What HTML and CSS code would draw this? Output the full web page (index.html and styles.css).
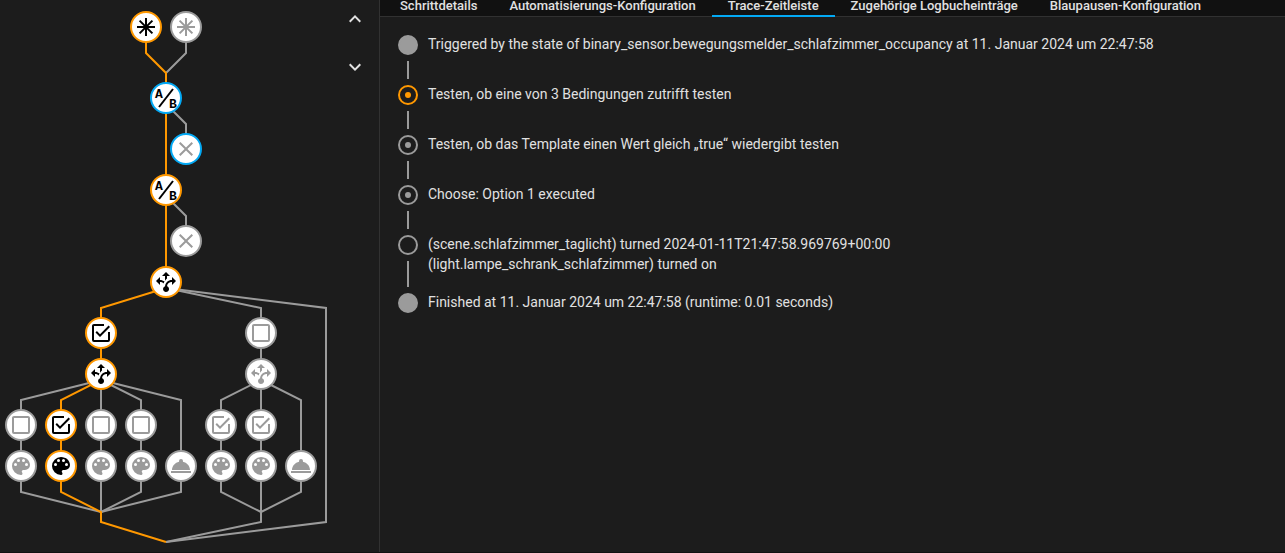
FILE: index.html
```
<!DOCTYPE html>
<html lang="de">

<head>
    <meta charset="UTF-8">
    <meta name="viewport" content="width=device-width, initial-scale=1.0">
    <title>Automatisierungs-Trace</title>
    <link rel="stylesheet" href="styles.css">
</head>

<body>

    <!-- Icons used by the graph nodes -->
    <svg class="icon-defs" aria-hidden="true">
        <defs>
            <symbol id="trigger" viewBox="0 0 24 24">
                <path class="stroke" d="M12 3V21M3 12H21M5.6 5.6L18.4 18.4M18.4 5.6L5.6 18.4" />
            </symbol>
            <symbol id="condition" viewBox="0 0 24 24">
                <path class="stroke" d="M5 21L19 3" />
                <text x="1" y="12">A</text>
                <text x="15" y="22">B</text>
            </symbol>
            <symbol id="close" viewBox="0 0 24 24">
                <path d="M19,6.41L17.59,5L12,10.59L6.41,5L5,6.41L10.59,12L5,17.59L6.41,19L12,13.41L17.59,19L19,17.59L13.41,12L19,6.41Z" />
            </symbol>
            <symbol id="choose" viewBox="0 0 24 24">
                <path d="M9.64,13.4C8.63,12.5 7.34,12.03 6,12V15L2,11L6,7V10C7.67,10 9.3,10.57 10.63,11.59C10.22,12.15 9.89,12.76 9.64,13.4M18,15V12C17.5,12 13.5,12.16 13.05,16.2C14.61,16.75 15.43,18.47 14.88,20.03C14.33,21.59 12.61,22.41 11.05,21.86C9.5,21.3 8.67,19.59 9.22,18.03C9.5,17.17 10.2,16.5 11.05,16.2C11.34,12.61 14.4,9.88 18,10V7L22,11L18,15M13,6H16L12,2L8,6H11V10.81C11.68,9.76 12.32,9.15 13,8.5V6Z" />
            </symbol>
            <symbol id="checked" viewBox="0 0 24 24">
                <path d="M19,19H5V5H15V3H5C3.89,3 3,3.89 3,5V19A2,2 0 0,0 5,21H19A2,2 0 0,0 21,19V11H19M7.91,10.08L6.5,11.5L11,16L21,6L19.59,4.58L11,13.17L7.91,10.08Z" />
            </symbol>
            <symbol id="blank" viewBox="0 0 24 24">
                <path d="M19,3H5C3.89,3 3,3.89 3,5V19A2,2 0 0,0 5,21H19A2,2 0 0,0 21,19V5C21,3.89 20.1,3 19,3M19,5V19H5V5H19Z" />
            </symbol>
            <symbol id="scene" viewBox="0 0 24 24">
                <path d="M17.5,12A1.5,1.5 0 0,1 16,10.5A1.5,1.5 0 0,1 17.5,9A1.5,1.5 0 0,1 19,10.5A1.5,1.5 0 0,1 17.5,12M14.5,8A1.5,1.5 0 0,1 13,6.5A1.5,1.5 0 0,1 14.5,5A1.5,1.5 0 0,1 16,6.5A1.5,1.5 0 0,1 14.5,8M9.5,8A1.5,1.5 0 0,1 8,6.5A1.5,1.5 0 0,1 9.5,5A1.5,1.5 0 0,1 11,6.5A1.5,1.5 0 0,1 9.5,8M6.5,12A1.5,1.5 0 0,1 5,10.5A1.5,1.5 0 0,1 6.5,9A1.5,1.5 0 0,1 8,10.5A1.5,1.5 0 0,1 6.5,12M12,3A9,9 0 0,0 3,12A9,9 0 0,0 12,21A1.5,1.5 0 0,0 13.5,19.5C13.5,19.11 13.35,18.76 13.11,18.5C12.88,18.23 12.73,17.88 12.73,17.5A1.5,1.5 0 0,1 14.23,16H16A5,5 0 0,0 21,11C21,6.58 16.97,3 12,3Z" />
            </symbol>
            <symbol id="service" viewBox="0 0 24 24">
                <path d="M12,5A2,2 0 0,1 14,7C14,7.24 13.96,7.47 13.88,7.69C17.95,8.5 21,11.91 21,16H3C3,11.91 6.05,8.5 10.12,7.69C10.04,7.47 10,7.24 10,7A2,2 0 0,1 12,5M22,19H2V17H22V19Z" />
            </symbol>
        </defs>
    </svg>

    <main class="trace">
        <section class="graph-panel">
            <svg class="graph" width="330" height="545" viewBox="0 0 330 545" role="img" aria-label="Ablaufdiagramm">
                <!-- Paths that were not taken -->
                <g class="lines">
                    <path d="M186 27V53L166 73" />
                    <path d="M166 104L186 124V149" />
                    <path d="M166 196L186 216V241" />
                    <path d="M166 288L261 308V374" />
                    <path d="M166 288L326 308V522L166 542" />
                    <path d="M101 380L21 400V492L101 512" />
                    <path d="M101 380V512" />
                    <path d="M101 380L141 400V492L101 512" />
                    <path d="M101 380L181 400V492L101 512" />
                    <path d="M261 380L221 400V492L261 512" />
                    <path d="M261 374V522L166 542" />
                    <path d="M261 380L301 400V492L261 512" />
                </g>

                <!-- Executed path -->
                <g class="lines tracked">
                    <path d="M146 27V53L166 73V288L101 308V380L61 400V492L101 512V522L166 542" />
                </g>

                <g id="nodes"></g>
            </svg>

            <div class="graph-actions">
                <button type="button" aria-label="Vorheriger Schritt">
                    <svg viewBox="0 0 24 24"><path d="M7.41,15.41L12,10.83L16.59,15.41L18,14L12,8L6,14L7.41,15.41Z" /></svg>
                </button>
                <button type="button" aria-label="Nächster Schritt">
                    <svg viewBox="0 0 24 24"><path d="M7.41,8.59L12,13.17L16.59,8.59L18,10L12,16L6,10L7.41,8.59Z" /></svg>
                </button>
            </div>
        </section>

        <section class="info">
            <nav class="tabs" role="tablist">
                <button type="button" role="tab">Schrittdetails</button>
                <button type="button" role="tab">Automatisierungs-Konfiguration</button>
                <button type="button" role="tab" class="active" aria-selected="true">Trace-Zeitleiste</button>
                <button type="button" role="tab">Zugehörige Logbucheinträge</button>
                <button type="button" role="tab">Blaupausen-Konfiguration</button>
            </nav>

            <ol class="timeline">
                <li>
                    <span class="marker filled"></span>
                    <p>Triggered by the state of binary_sensor.bewegungsmelder_schlafzimmer_occupancy at 11. Januar 2024 um 22:47:58</p>
                </li>
                <li>
                    <span class="marker dot selected"></span>
                    <p>Testen, ob eine von 3 Bedingungen zutrifft testen</p>
                </li>
                <li>
                    <span class="marker dot"></span>
                    <p>Testen, ob das Template einen Wert gleich „true“ wiedergibt testen</p>
                </li>
                <li>
                    <span class="marker dot"></span>
                    <p>Choose: Option 1 executed</p>
                </li>
                <li>
                    <span class="marker"></span>
                    <p>(scene.schlafzimmer_taglicht) turned 2024-01-11T21:47:58.969769+00:00<br>(light.lampe_schrank_schlafzimmer) turned on</p>
                </li>
                <li>
                    <span class="marker filled"></span>
                    <p>Finished at 11. Januar 2024 um 22:47:58 (runtime: 0.01 seconds)</p>
                </li>
            </ol>
        </section>
    </main>

    <script>
        // [x, y, icon, state]
        const nodes = [
            [146, 27, "trigger", "tracked"],
            [186, 27, "trigger", ""],
            [166, 98, "condition", "tracked active"],
            [186, 149, "close", "active"],
            [166, 190, "condition", "tracked"],
            [186, 241, "close", ""],
            [166, 282, "choose", "tracked"],
            [101, 333, "checked", "tracked"],
            [261, 333, "blank", ""],
            [101, 374, "choose", "tracked"],
            [261, 374, "choose", ""],
            [21, 425, "blank", ""],
            [61, 425, "checked", "tracked"],
            [101, 425, "blank", ""],
            [141, 425, "blank", ""],
            [221, 425, "checked", ""],
            [261, 425, "checked", ""],
            [21, 466, "scene", ""],
            [61, 466, "scene", "tracked"],
            [101, 466, "scene", ""],
            [141, 466, "scene", ""],
            [181, 466, "service", ""],
            [221, 466, "scene", ""],
            [261, 466, "scene", ""],
            [301, 466, "service", ""]
        ];

        document.getElementById("nodes").innerHTML = nodes.map(([x, y, icon, state]) => `
            <g class="node ${state}">
                <circle cx="${x}" cy="${y}" r="15" />
                <use href="#${icon}" x="${x - 12}" y="${y - 12}" width="24" height="24" />
            </g>`).join("");
    </script>

</body>

</html>
```
FILE: styles.css
```
* {
    box-sizing: border-box;
    margin: 0;
    padding: 0;
}

:root {
    --primary: #03a9f4;
    --accent: #ff9800;
    --muted: #9b9b9b;
    --text: #e1e1e1;
    --divider: #313131;
}

body {
    background-color: #1c1c1c;
    color: var(--text);
    font-family: Roboto, sans-serif;
    font-size: 14px;
    line-height: 20px;
}

button {
    background: none;
    border: none;
    color: inherit;
    font: inherit;
    cursor: pointer;
}

.icon-defs {
    position: absolute;
    width: 0;
    height: 0;
}

.trace {
    display: flex;
    min-height: 100vh;
    border-bottom: 1px solid #111;
}

/* Graph */
.graph-panel {
    display: flex;
    justify-content: space-between;
    align-items: flex-start;
    flex: none;
    padding-right: 12px;
    border-right: 1px solid var(--divider);
}

.graph {
    margin-right: 13px;
}

.lines {
    fill: none;
    stroke: var(--muted);
    stroke-width: 2;
}

.lines.tracked {
    stroke: var(--accent);
}

.node {
    color: var(--muted);
}

.node circle {
    fill: white;
    stroke: var(--muted);
    stroke-width: 2;
}

.node use {
    fill: currentColor;
}

.node.tracked {
    color: black;
}

.node.tracked circle {
    stroke: var(--accent);
}

.node.active circle {
    stroke: var(--primary);
}

.stroke {
    fill: none;
    stroke: currentColor;
    stroke-width: 2;
}

symbol text {
    font-family: "Liberation Sans Narrow", "Liberation Mono", monospace;
    font-size: 13px;
    font-weight: bold;
}

.graph-actions {
    display: flex;
    flex-direction: column;
    gap: 24px;
    padding-top: 7px;
}

.graph-actions button {
    width: 24px;
    height: 24px;
}

.graph-actions svg {
    display: block;
    fill: var(--text);
}

/* Tabs */
.info {
    flex: 1;
    min-width: 0;
}

.tabs {
    display: flex;
    padding-left: 4px;
    background-color: #111;
    border-bottom: 1px solid var(--divider);
}

.tabs button {
    height: 17px;
    margin-bottom: -1px;
    padding: 0 16px 4px;
    border-bottom: 2px solid transparent;
    font-size: 13px;
    font-weight: 500;
    line-height: 11px;
    white-space: nowrap;
}

.tabs button.active {
    border-color: var(--primary);
}

/* Timeline */
.timeline {
    padding: 17px 18px;
    list-style: none;
}

.timeline li {
    display: grid;
    grid-template-columns: 20px 1fr;
    grid-template-rows: 20px 1fr;
    column-gap: 10px;
    min-height: 50px;
    padding-top: 1px;
}

.timeline p {
    grid-row: 1 / 3;
    grid-column: 2;
    margin-top: -1px;
    padding-bottom: 18px;
}

.timeline li:not(:last-child)::after {
    content: "";
    width: 2px;
    margin: 6px auto 5px;
    background-color: var(--muted);
}

.marker {
    display: grid;
    place-items: center;
    width: 20px;
    height: 20px;
    border: 2px solid var(--muted);
    border-radius: 50%;
}

.marker.filled {
    background-color: var(--muted);
}

.marker.dot::before {
    content: "";
    width: 6px;
    height: 6px;
    border-radius: 50%;
    background-color: var(--muted);
}

.marker.selected {
    border-color: var(--accent);
}

.marker.selected::before {
    background-color: var(--accent);
}
```
